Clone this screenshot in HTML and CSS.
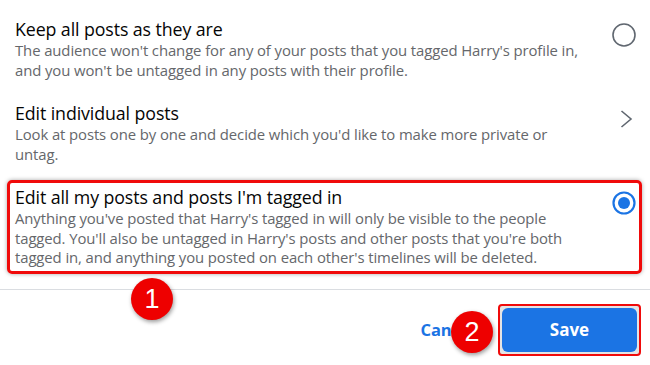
FILE: index.html
```html
<!DOCTYPE html>
<html>
<head>
<meta charset="utf-8">
<link rel="stylesheet" href="styles.css">
</head>
<body>
<div class="dialog">
  <div class="options">
    <div class="option">
      <div class="text">
        <div class="title">Keep all posts as they are</div>
        <div class="desc">The audience won't change for any of your posts that you tagged Harry's profile in, and you won't be untagged in any posts with their profile.</div>
      </div>
      <svg class="ctrl" width="24" height="24" viewBox="0 0 24 24"><circle cx="12" cy="12" r="11" fill="none" stroke="#606770" stroke-width="1.6"/></svg>
    </div>
    <div class="option">
      <div class="text">
        <div class="title">Edit individual posts</div>
        <div class="desc">Look at posts one by one and decide which you'd like to make more private or untag.</div>
      </div>
      <svg class="ctrl" width="24" height="24" viewBox="0 0 24 24"><polyline points="9.5,4 19,12 9.5,20" fill="none" stroke="#606770" stroke-width="1.6" stroke-linejoin="miter"/></svg>
    </div>
    <div class="option selected">
      <div class="text">
        <div class="title">Edit all my posts and posts I'm tagged in</div>
        <div class="desc">Anything you've posted that Harry's tagged in will only be visible to the people tagged. You'll also be untagged in Harry's posts and other posts that you're both tagged in, and anything you posted on each other's timelines will be deleted.</div>
      </div>
      <svg class="ctrl" width="24" height="24" viewBox="0 0 24 24"><circle cx="12" cy="12" r="10.5" fill="none" stroke="#1b74e4" stroke-width="2.2"/><circle cx="12" cy="12" r="6" fill="#1b74e4"/></svg>
    </div>
  </div>
  <div class="divider"></div>
  <div class="footer">
    <span class="cancel">Cancel</span>
    <div class="highlight">
      <button class="save">Save</button>
    </div>
  </div>
  <div class="badge badge-one">1</div>
  <div class="badge badge-two">2</div>
</div>
</body>
</html>
```
FILE: styles.css
```css
html, body {
  margin: 0;
  padding: 0;
  background: #ffffff;
}
.dialog {
  position: relative;
  width: 650px;
  height: 365px;
  font-family: "Open Sans", "Noto Sans", sans-serif;
  overflow: hidden;
}
.options {
  display: flex;
  flex-direction: column;
  gap: 10px;
  padding-top: 12px;
}
.option {
  display: flex;
  align-items: flex-start;
  margin: 0 8px 0 7px;
  border: 2px solid transparent;
  border-radius: 5px;
  padding: 4px 4px 4px 6px;
}
.option.selected {
  border: 3px solid #f00a0a;
  padding: 3px 3px 3px 5px;
  box-shadow: 0 0 4px rgba(0, 0, 0, 0.35);
}
.text {
  flex: 1;
  padding-right: 24px;
}
.title {
  font-size: 17.8px;
  line-height: 22px;
  color: #050505;
  letter-spacing: -0.1px;
}
.desc {
  font-size: 14.9px;
  line-height: 19.5px;
  color: #65676b;
  margin-top: 1px;
  letter-spacing: -0.1px;
}
.ctrl {
  flex: none;
  margin-top: 5px;
}
.divider {
  height: 1px;
  background: #dadde1;
  margin-top: 15px;
}
.footer {
  display: flex;
  justify-content: flex-end;
  align-items: center;
  padding: 14px 9px 0 0;
}
.cancel {
  color: #1b74e4;
  font-weight: 700;
  font-size: 16.5px;
  margin-right: 24px;
  letter-spacing: -0.2px;
}
.highlight {
  border: 2.5px solid #f00a0a;
  border-radius: 4px;
  padding: 2px;
  background: #e4e4e4;
}
.save {
  display: block;
  width: 135px;
  height: 44px;
  border: none;
  border-radius: 6px;
  background: #1b74e4;
  color: #ffffff;
  font-family: "Open Sans", "Noto Sans", sans-serif;
  font-weight: 700;
  font-size: 17px;
}
.badge {
  position: absolute;
  width: 42px;
  height: 42px;
  border-radius: 50%;
  background: #ee0000;
  color: #ffffff;
  font-family: "Liberation Sans", Arial, sans-serif;
  font-size: 27px;
  line-height: 42px;
  text-align: center;
  box-shadow: 1px 2px 4px rgba(0, 0, 0, 0.4);
}
.badge-one {
  left: 131px;
  top: 278px;
}
.badge-two {
  left: 451px;
  top: 311px;
}
```
